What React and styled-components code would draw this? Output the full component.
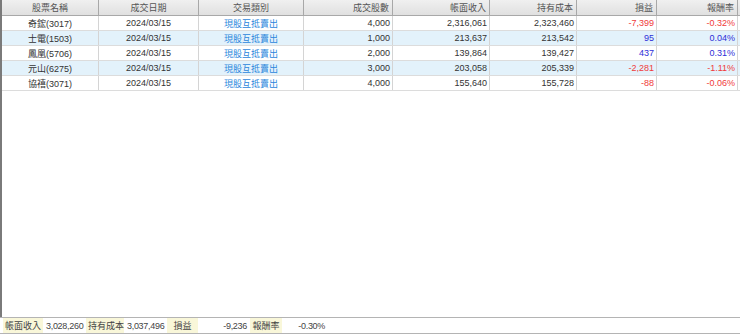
import React from "react";
import styled, { createGlobalStyle } from "styled-components";

const GlobalStyle = createGlobalStyle`
    html, body {
        margin: 0;
        padding: 0;
        background: #ffffff;
    }
    body {
        font-family: "Liberation Sans", "Noto Sans CJK TC", sans-serif;
        font-size: 9px;
        color: #333333;
    }
`;

const Page = styled.div`
    width: 740px;
    height: 336px;
    display: flex;
    flex-direction: column;
    background: #ffffff;
    overflow: hidden;
`;

const Grid = styled.div`
    flex: 1;
    display: flex;
    flex-direction: column;
    border-left: 2px solid #7a7a7a;
`;

const cols = "97px 100px 105px 89px 97px 87px 80px 81px";

const HeaderRow = styled.div`
    display: grid;
    grid-template-columns: ${cols};
    height: 15px;
    background: linear-gradient(#f0f0f0, #e0e0e0);
    border-bottom: 1px solid #a8a8a8;
`;

const HeadCell = styled.div`
    display: flex;
    align-items: center;
    justify-content: ${(p) => (p.$num ? "flex-end" : "center")};
    padding: 0 3px;
    border-right: 1px solid #a8a8a8;
    color: #555555;
    white-space: nowrap;
`;

const Row = styled.div`
    display: grid;
    grid-template-columns: ${cols};
    height: 14px;
    border-bottom: 1px solid #dcdcdc;
    background: ${(p) => (p.$alt ? "#e3f2fb" : "#ffffff")};
`;

const Cell = styled.div`
    display: flex;
    align-items: center;
    justify-content: ${(p) => (p.$num ? "flex-end" : "center")};
    padding: 0 2px;
    border-right: 1px solid #d4d4d4;
    white-space: nowrap;
    color: ${(p) => p.$color || "#333333"};
`;

const Footer = styled.div`
    height: 15px;
    margin-bottom: 2px;
    border-top: 1px solid #b4b4b4;
    border-bottom: 1px solid #b4b4b4;
    display: flex;
    align-items: stretch;
    padding-left: 3px;
    font-size: 9px;
    color: #444444;
`;

const FootLabel = styled.div`
    width: ${(p) => p.$w}px;
    background: #f9f7d9;
    display: flex;
    align-items: center;
    justify-content: ${(p) => p.$align || "flex-start"};
    padding: 0 2px;
    box-sizing: border-box;
    white-space: nowrap;
`;

const FootValue = styled.div`
    width: ${(p) => p.$w}px;
    display: flex;
    align-items: center;
    justify-content: ${(p) => (p.$right ? "flex-end" : "flex-start")};
    padding: 0 3px;
    box-sizing: border-box;
    white-space: nowrap;
    letter-spacing: -0.3px;
`;

const RED = "#f03a3a";
const BLUE = "#2e2ed8";
const LINK = "#2b86dc";

const rows = [
    ["奇鋐(3017)", "4,000", "2,316,061", "2,323,460", "-7,399", "-0.32%"],
    ["士電(1503)", "1,000", "213,637", "213,542", "95", "0.04%"],
    ["鳳凰(5706)", "2,000", "139,864", "139,427", "437", "0.31%"],
    ["元山(6275)", "3,000", "203,058", "205,339", "-2,281", "-1.11%"],
    ["協禧(3071)", "4,000", "155,640", "155,728", "-88", "-0.06%"],
];

export default function App() {
    return (
        <Page>
            <GlobalStyle />
            <Grid>
                <HeaderRow>
                    <HeadCell>股票名稱</HeadCell>
                    <HeadCell>成交日期</HeadCell>
                    <HeadCell>交易類別</HeadCell>
                    <HeadCell $num>成交股數</HeadCell>
                    <HeadCell $num>帳面收入</HeadCell>
                    <HeadCell $num>持有成本</HeadCell>
                    <HeadCell $num>損益</HeadCell>
                    <HeadCell $num>報酬率</HeadCell>
                </HeaderRow>
                {rows.map((r, i) => {
                    const color = r[4].startsWith("-") ? RED : BLUE;
                    return (
                        <Row key={r[0]} $alt={i % 2 === 1}>
                            <Cell>{r[0]}</Cell>
                            <Cell>2024/03/15</Cell>
                            <Cell $color={LINK}>現股互抵賣出</Cell>
                            <Cell $num>{r[1]}</Cell>
                            <Cell $num>{r[2]}</Cell>
                            <Cell $num>{r[3]}</Cell>
                            <Cell $num $color={color}>{r[4]}</Cell>
                            <Cell $num $color={color}>{r[5]}</Cell>
                        </Row>
                    );
                })}
            </Grid>
            <Footer>
                <FootLabel $w={40}>帳面收入</FootLabel>
                <FootValue $w={43}>3,028,260</FootValue>
                <FootLabel $w={38}>持有成本</FootLabel>
                <FootValue $w={43}>3,037,496</FootValue>
                <FootLabel $w={31} $align="center">損益</FootLabel>
                <FootValue $w={52} $right>-9,236</FootValue>
                <FootLabel $w={32} $align="center">報酬率</FootLabel>
                <FootValue $w={46} $right>-0.30%</FootValue>
            </Footer>
        </Page>
    );
}
